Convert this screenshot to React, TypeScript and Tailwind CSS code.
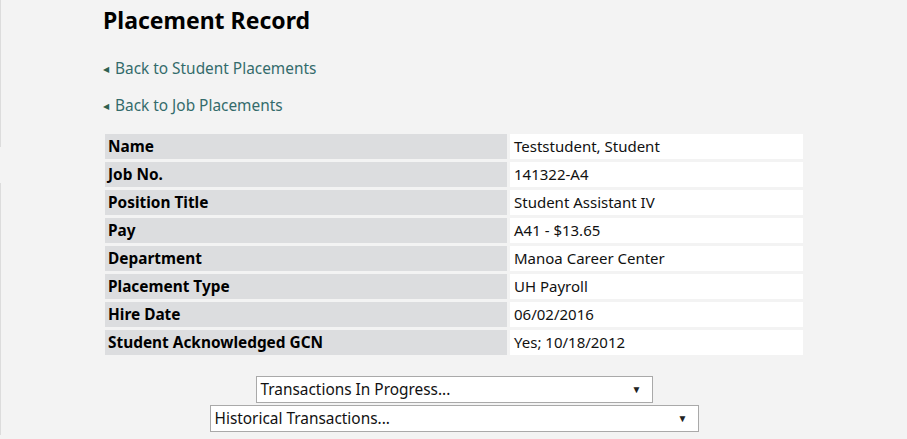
import React from 'react';

const rows: [string, string][] = [
  ['Name', 'Teststudent, Student'],
  ['Job No.', '141322-A4'],
  ['Position Title', 'Student Assistant IV'],
  ['Pay', 'A41 - $13.65'],
  ['Department', 'Manoa Career Center'],
  ['Placement Type', 'UH Payroll'],
  ['Hire Date', '06/02/2016'],
  ['Student Acknowledged GCN', 'Yes; 10/18/2012'],
];

const BackLink = ({ label }: { label: string }) => (
  <a href="#" className="flex items-center text-[15.4px] leading-[20px] text-[#336b6b] no-underline">
    <span className="text-[8px] text-[#2f5f4f] mr-[6px] ml-[1px]">◀</span>
    {label}
  </a>
);

const FakeSelect = ({ label, width }: { label: string; width: string }) => (
  <div className={`${width} h-[27px] bg-white border border-[#a9a9a9] flex items-center justify-between pl-[4px] pr-[10px] text-[15.4px] text-[#111]`}>
    <span>{label}</span>
    <span className="text-[10px] text-[#222]">▼</span>
  </div>
);

export default function App() {
  return (
    <div className="w-[907px] h-[439px] bg-[#f3f3f3] flex overflow-hidden" style={{ fontFamily: '"Noto Sans", "Open Sans", sans-serif' }}>
      <div className="w-px flex flex-col">
        <div className="h-[147px] bg-[#dcdcdc]" />
        <div className="h-[36px]" />
        <div className="h-[252px] bg-[#dcdcdc]" />
      </div>
      <div className="ml-[101px] w-[704px] flex flex-col">
        <h1 className="mt-[5px] ml-[1px] text-[23px] leading-[30px] font-bold text-black">Placement Record</h1>
        <div className="mt-[24px]">
          <BackLink label="Back to Student Placements" />
        </div>
        <div className="mt-[17px]">
          <BackLink label="Back to Job Placements" />
        </div>
        <table className="mt-[15px] w-[704px] border-separate border-spacing-[3px] text-[15px]">
          <tbody>
            {rows.map(([k, v]) => (
              <tr key={k}>
                <td className="w-[402px] h-[25px] p-0 pl-[3px] bg-[#dcdddf] font-bold text-[15.4px] text-black align-middle leading-[25px]">{k}</td>
                <td className="h-[25px] p-0 pl-[4px] bg-white text-[#111] align-middle leading-[25px]">{v}</td>
              </tr>
            ))}
          </tbody>
        </table>
        <div className="mt-[18px] flex flex-col items-center gap-[2px]">
          <FakeSelect label="Transactions In Progress..." width="w-[397px]" />
          <FakeSelect label="Historical Transactions..." width="w-[489px]" />
        </div>
      </div>
    </div>
  );
}
